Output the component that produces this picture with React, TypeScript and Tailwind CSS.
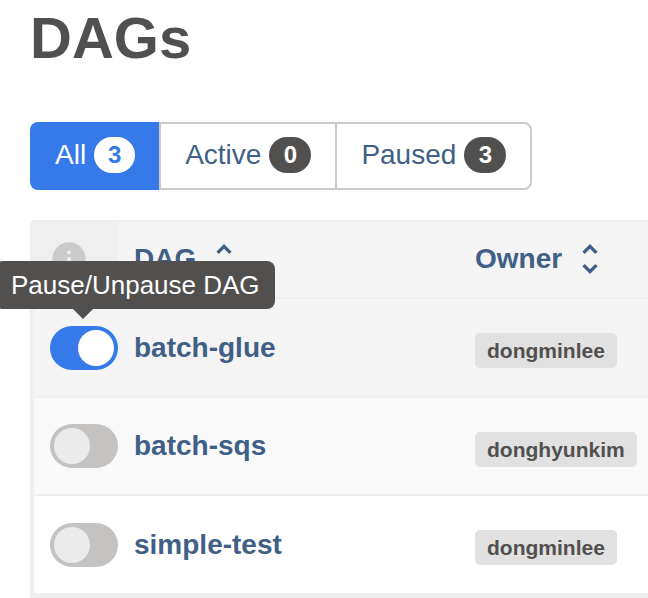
import { useState } from "react";

type Dag = { id: string; owner: string; active: boolean; hovered?: boolean };

const dags: Dag[] = [
  { id: "batch-glue", owner: "dongminlee", active: true, hovered: true },
  { id: "batch-sqs", owner: "donghyunkim", active: false },
  { id: "simple-test", owner: "dongminlee", active: false },
];

const filters = [
  { label: "All", count: 3, selected: true },
  { label: "Active", count: 0, selected: false },
  { label: "Paused", count: 3, selected: false },
];

function StatusFilters() {
  return (
    <nav aria-label="DAG status" className="flex h-[68px] w-fit text-[28px] leading-8">
      {filters.map(({ label, count, selected }) => (
        <a
          key={label}
          href={`#${label.toLowerCase()}`}
          aria-current={selected ? "page" : undefined}
          className={
            selected
              ? "flex items-center gap-2 rounded-l-lg bg-[#357ae8] pr-6 pb-0.5 pl-[25px] text-white"
              : "flex items-center gap-2 border-2 border-r-0 border-[#cbcbcb] px-6 pb-0.5 text-[#3f5f87] last:rounded-r-lg last:border-r-2"
          }
        >
          {label}
          <span
            className={
              selected
                ? "flex h-9 w-[41px] items-center justify-center rounded-full bg-white text-2xl font-bold text-[#357ae8]"
                : "flex h-9 w-[42px] items-center justify-center rounded-full bg-[#51504f] text-2xl font-bold text-white"
            }
          >
            {count}
          </span>
        </a>
      ))}
    </nav>
  );
}

function InfoIcon() {
  return (
    <svg viewBox="0 0 24 24" className="size-10 fill-[#cbcbcb]" aria-hidden="true">
      <path d="M12 2C6.48 2 2 6.48 2 12s4.48 10 10 10 10-4.48 10-10S17.52 2 12 2zm1 15h-2v-6h2v6zm0-8h-2V7h2v2z" />
    </svg>
  );
}

function SortIcon({ ascending = false }: { ascending?: boolean }) {
  return (
    <svg viewBox="0 0 24 24" className="size-10 fill-current" aria-hidden="true">
      <path d="M12 5.83L15.17 9l1.41-1.41L12 3 7.41 7.59 8.83 9 12 5.83z" />
      {!ascending && <path d="M12 18.17L8.83 15l-1.41 1.41L12 21l4.59-4.59L15.17 15 12 18.17z" />}
    </svg>
  );
}

function PauseSwitch({ dag }: { dag: Dag }) {
  const [on, setOn] = useState(dag.active);
  return (
    <div className="relative h-11 w-[68px]">
      <label className="block cursor-pointer">
        <input
          type="checkbox"
          role="switch"
          aria-label={`Pause/Unpause ${dag.id}`}
          checked={on}
          onChange={(e) => setOn(e.target.checked)}
          className="peer sr-only"
        />
        <span className="flex h-11 rounded-full bg-[#c4c3c2] p-1 peer-checked:justify-end peer-checked:bg-[#357ae8] peer-checked:*:bg-white">
          <span className="size-9 rounded-full bg-[#ebebeb]" />
        </span>
      </label>
      {dag.hovered && (
        <div
          role="tooltip"
          className="absolute bottom-full -left-[55px] mb-[17px] rounded-lg bg-[#51504f] py-2 pr-[15px] pl-4 text-[26px] leading-8 font-normal whitespace-nowrap text-white"
        >
          Pause/Unpause DAG
          <svg viewBox="0 0 20 10" className="absolute top-full left-[78px] h-[10px] w-5 fill-[#51504f]" aria-hidden="true">
            <path d="M0 0h20L10 10z" />
          </svg>
        </div>
      )}
    </div>
  );
}

export default function App() {
  return (
    <main className="bg-white pt-1.5 pl-[30px] font-['Liberation_Sans',Arial,sans-serif] text-[#51504f]">
      <h1 className="mb-[52px] text-[58px] leading-[64px] font-bold">DAGs</h1>
      <StatusFilters />
      <table className="mt-[30px] w-full table-fixed border-separate border-spacing-0 rounded-tl border-b-[5px] border-[#efefef] text-[28px] leading-8 font-bold text-[#3f5f87]">
        <colgroup>
          <col className="w-[88px]" />
          <col className="w-[357px]" />
          <col />
        </colgroup>
        <thead>
          <tr className="h-[79px] bg-[#f4f4f4] text-left">
            <th scope="col" aria-label="Pause" className="rounded-tl bg-[#efefef] pb-0.5 pl-[19px]">
              <InfoIcon />
            </th>
            <th scope="col" className="border-y-2 border-[#efefef] pb-0.5 pl-4">
              <button type="button" className="flex items-center gap-2">
                DAG
                <SortIcon ascending />
              </button>
            </th>
            <th scope="col" className="border-y-2 border-[#efefef] pb-0.5">
              <button type="button" className="flex items-center gap-2">
                Owner
                <SortIcon />
              </button>
            </th>
          </tr>
        </thead>
        <tbody>
          {dags.map((dag) => (
            <tr
              key={dag.id}
              className={
                dag.hovered
                  ? "group h-[99px] bg-[#f4f4f4]"
                  : "group h-[98px] even:bg-[#f9f9f9] last:h-[97px] last:bg-white"
              }
            >
              <td className="border-b-2 border-l-4 border-[#efefef] pl-4 group-last:border-b-0">
                <PauseSwitch dag={dag} />
              </td>
              <td className="border-b-2 border-[#efefef] pl-4 group-last:border-b-0">
                <a href={`#${dag.id}`}>{dag.id}</a>
              </td>
              <td className="border-b-2 border-[#efefef] group-last:border-b-0">
                <a
                  href={`#${dag.owner}`}
                  className="mt-1.5 block w-fit rounded-[5px] bg-[#e1e1e1] px-3 py-[5px] text-[21px] leading-[25px] text-[#51504f]"
                >
                  {dag.owner}
                </a>
              </td>
            </tr>
          ))}
        </tbody>
      </table>
    </main>
  );
}
